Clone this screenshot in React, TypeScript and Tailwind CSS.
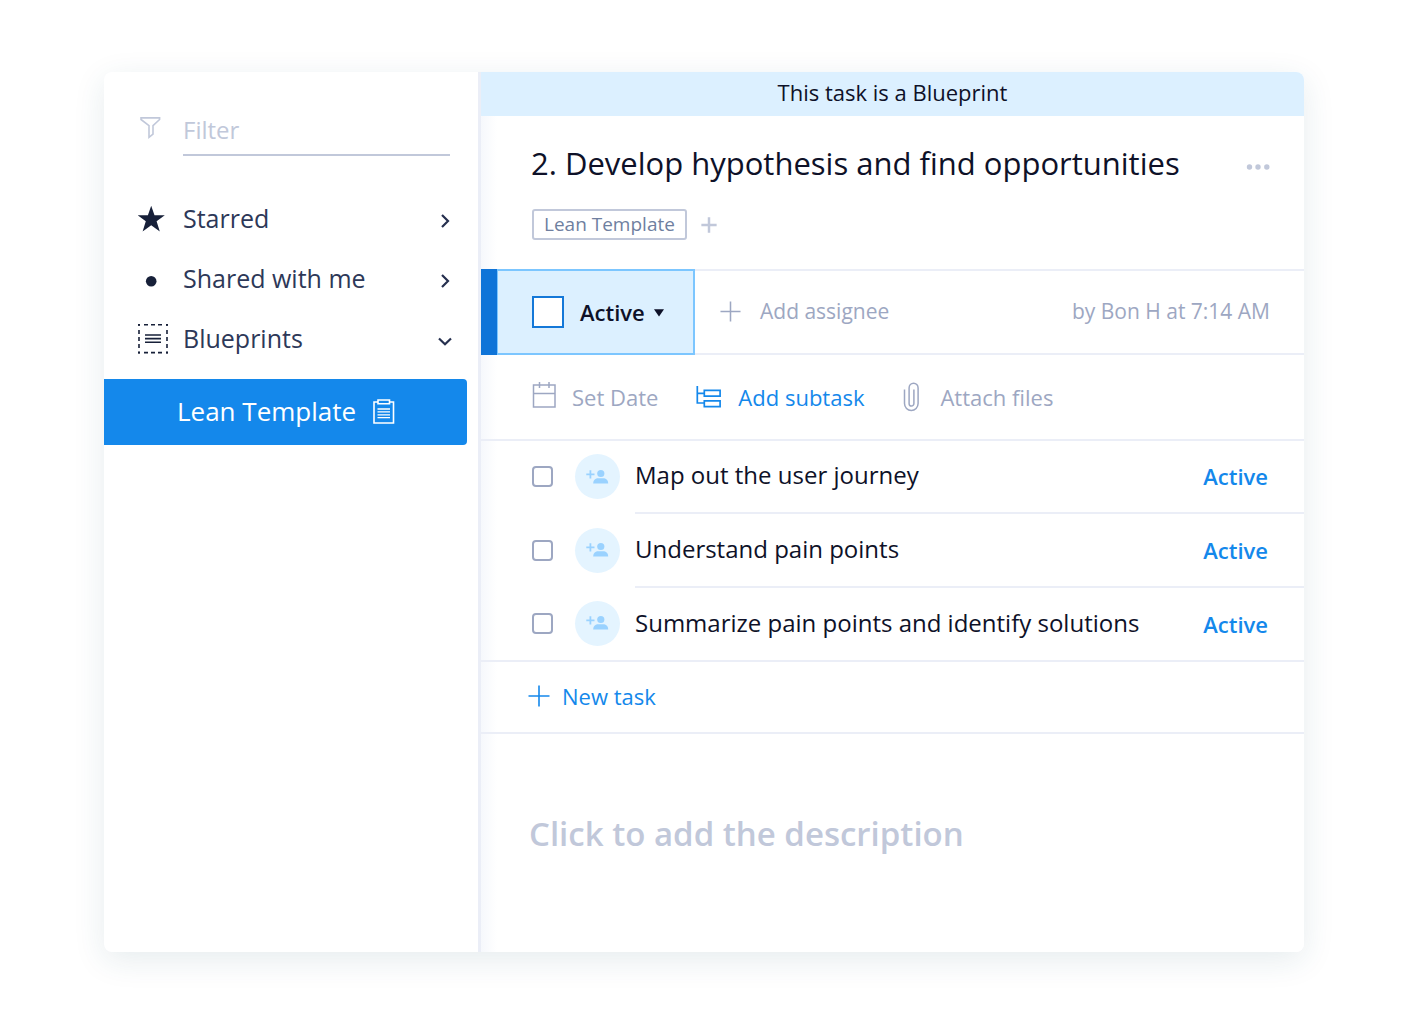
import React from 'react';

const NAV_ITEMS = [
    { label: 'Starred', icon: 'star', open: false },
    { label: 'Shared with me', icon: 'dot', open: false },
    { label: 'Blueprints', icon: 'blueprint', open: true },
];

const TASKS = [
    { id: 1, title: 'Map out the user journey', status: 'Active' },
    { id: 2, title: 'Understand pain points', status: 'Active' },
    { id: 3, title: 'Summarize pain points and identify solutions', status: 'Active' },
];

const NavIcon: React.FC<{ name: string }> = ({ name }) => {
    if (name === 'star') {
        return (
            <svg width="30" height="30" viewBox="0 0 30 30" fill="#172039">
                <path d="M13.200 1.800l3.300 9.500h10.300l-8.200 6 3.200 10.200-8.600-6.300-8.600 6.300 3.200-10.200-8.200-6h10.300z" />
            </svg>
        );
    }
    if (name === 'dot') {
        return (
            <svg width="30" height="30" viewBox="0 0 30 30" fill="#172039">
                <circle cx="13.2" cy="17.3" r="5.3" />
            </svg>
        );
    }
    return (
        <svg width="30" height="30" viewBox="0 0 30 30" fill="none" stroke="#172039" strokeWidth="2">
            <path d="M0 .8h2M6 .8h4M13 .8h4M20 .8h4M28 .8h2M0 28.600h2M6 28.600h4M13 28.600h4M20 28.600h4M28 28.600h2" strokeWidth="1.6" />
            <path d="M1 0v2M1 6v4M1 13v4M1 20v4M1 27.500v2M29 0v2M29 6v4M29 13v4M29 20v4M29 27.500v2" strokeWidth="1.6" />
            <path d="M7 11h16M7 14.600h16M7 18.200h16" strokeWidth="1.6" />
        </svg>
    );
};

const Chevron: React.FC<{ open: boolean }> = ({ open }) => (
    <svg width="16" height="20" viewBox="0 0 16 20" fill="none" stroke="#26304f" strokeWidth="2.2">
        <path d={open ? 'M2 9.500l6 5.800 6-5.800' : 'M5 6l6 6-6 6'} />
    </svg>
);

const Plus: React.FC<{ size: number; stroke?: number }> = ({ size, stroke = 1.6 }) => (
    <svg width={size} height={size} viewBox="0 0 22 22" fill="none" stroke="currentColor" strokeWidth={stroke}>
        <path d="M11 0.5v21M0.5 11h21" />
    </svg>
);

const Sidebar: React.FC = () => (
    <aside className="w-[377px] shrink-0 border-r-[3px] border-[#ebeef7] pt-10">
        <div className="ml-[34px] mr-[28px] flex items-start">
            <svg className="mt-[4px] ml-[2px] mr-[22px]" width="21" height="23" viewBox="0 0 21 23" fill="none" stroke="#c1c8da" strokeWidth="1.6">
                <path d="M1 1.9h18.6v1.6l-6.6 6.2v8.4l-4 3.2V9.7L1 3.5z" />
            </svg>
            <input
                type="text"
                aria-label="Filter"
                placeholder="Filter"
                className="h-11 min-w-0 flex-1 border-b-2 border-[#c1c8da] bg-transparent pb-[8px] text-2xl text-[#2d3858] outline-none placeholder:text-[#c1c8da]"
            />
        </div>

        <nav className="mt-[33px]">
            {NAV_ITEMS.map((item) => (
                <button key={item.label} type="button" className="flex h-[60px] w-full items-center pl-[34px] pr-[25px] text-[25px] text-[#2d3858]">
                    <NavIcon name={item.icon} />
                    <span className="ml-[15px] flex-1 text-left">{item.label}</span>
                    <Chevron open={item.open} />
                </button>
            ))}
            <a href="#lean-template" className="mt-[10px] mr-[11px] flex h-[66px] items-center rounded-r bg-[#1488eb] pb-[2px] pl-[73px] text-[26px] text-white">
                Lean Template
                <svg className="ml-[17px]" width="22" height="25" viewBox="0 0 22 25" fill="none" stroke="#fff" strokeWidth="1.6">
                    <path d="M5 3H1v21h19.500V3h-4M5 1h11.500v3.800H5z" />
                    <path d="M4.500 10h12.500M4.500 12.900h12.500M4.500 15.800h12.500M4.500 18.700h12.500" strokeWidth="1.3" />
                </svg>
            </a>
        </nav>
    </aside>
);

const StatusRow: React.FC = () => (
    <div className="flex h-[86px] items-stretch border-y-2 border-[#ebeef7]">
        <div className="-my-[2px] w-4 bg-[#0f74d8]" />
        <div className="-my-[2px] flex w-[198px] items-center border-y-2 border-r-2 border-l border-[#7cc6ff] bg-[#dcf0ff] pl-[34px]">
            <input
                type="checkbox"
                aria-label="Complete task"
                className="size-8 appearance-none border-2 border-[#1478d8] bg-white"
            />
            <button type="button" className="ml-[16px] flex items-center gap-2 text-[22px] font-semibold text-[#0e1128]">
                Active
                <svg width="12" height="10" viewBox="0 0 12 10" fill="#0e1128">
                    <path d="M1 2.200h10L6 9.600z" />
                </svg>
            </button>
        </div>
        <button type="button" className="ml-[25px] flex items-center gap-[19px] pb-px text-[21px] text-[#9da7c2]">
            <Plus size={21} />
            Add assignee
        </button>
        <span className="ml-auto self-center pr-[34px] text-[21px] text-[#9da7c2]">by Bon H at 7:14 AM</span>
    </div>
);

const ActionRow: React.FC = () => (
    <div className="flex h-[86px] items-center border-b-2 border-[#ebeef7] pl-[51px] text-[22px] text-[#9da7c2]">
        <button type="button" className="flex items-center gap-4">
            <svg width="24" height="32" viewBox="0 0 24 32" fill="none" stroke="currentColor" strokeWidth="1.5">
                <path d="M1.500 4h21.500v22H1.500zM1.500 12.500h21.500M7.500 1v6M17 1v6" />
            </svg>
            Set Date
        </button>
        <button type="button" className="ml-[38px] flex items-center gap-4 text-[#1488eb]">
            <svg width="26" height="22" viewBox="0 0 26 22" fill="none" stroke="currentColor" strokeWidth="1.7">
                <path d="M1.3 0v17h6.5M1.3 7.3h6.5M8.3 4.4h15.8v5.8H8.3zM8.3 14.8h15.8v5.8H8.3z" />
            </svg>
            Add subtask
        </button>
        <button type="button" className="ml-[39px] flex items-center gap-5">
            <svg width="17" height="30" viewBox="0 0 17 30" fill="none" stroke="currentColor" strokeWidth="1.5">
                <path d="M1.500 7.500v14a6.800 7 0 0 0 13.600 0V6a4.500 4.800 0 0 0-9 0v15.500a2.400 2.600 0 0 0 4.800 0V7.500" />
            </svg>
            Attach files
        </button>
    </div>
);

export const TaskPanel: React.FC = () => (
    <main className="flex min-w-0 flex-1 flex-col bg-linear-to-r from-[#f6f8fc] to-white to-[16px]">
        <div className="flex h-11 items-center justify-center bg-[#dcf0ff] pb-[3px] text-[22px] text-[#0e1128]">
            This task is a Blueprint
        </div>

        {/* Title and tags */}
        <header className="h-[153px] pt-[26px] pr-[34px] pl-[50px]">
            <div className="flex items-center justify-between">
                <h1 className="text-[31px] leading-[42px] text-[#0e1128]">2. Develop hypothesis and find opportunities</h1>
                <button type="button" aria-label="More actions" className="pt-2">
                    <svg width="24" height="6" viewBox="0 0 24 6" fill="#c1c8da">
                        <circle cx="3.500" cy="3" r="2.700" />
                        <circle cx="12" cy="3" r="2.700" />
                        <circle cx="20.800" cy="3" r="2.700" />
                    </svg>
                </button>
            </div>
            <div className="mt-[25px] flex items-center gap-[14px] pl-px">
                <a href="#lean-template" className="flex h-[31px] items-center rounded-[3px] border-2 border-[#c1c8da] px-[10px] text-[19px] text-[#6f7f9f]">
                    Lean Template
                </a>
                <button type="button" aria-label="Add tag" className="text-[#c1c8da]">
                    <Plus size={16} stroke={3.4} />
                </button>
            </div>
        </header>

        <StatusRow />
        <ActionRow />

        {/* Subtasks */}
        <ul className="border-b-2 border-[#ebeef7]">
            {TASKS.map((task) => (
                <li key={task.id} className="group flex h-[74px] items-center pl-[51px] first:h-[73px] last:h-[72px]">
                    <div className="flex items-center pb-[2px]">
                        <input
                            id={`task-${task.id}`}
                            type="checkbox"
                            className="size-[21px] appearance-none rounded-[4px] border-2 border-[#9da7c2] bg-white"
                        />
                        <button type="button" aria-label="Assign" className="ml-[22px] flex size-[45px] items-center justify-center rounded-full bg-[#e4f4ff]">
                            <svg width="24" height="16" viewBox="0 0 24 16" fill="#9ad2ff">
                                <path d="M3.500 1.300h1.800v3.200H8.500v1.800H5.300v3.200H3.500V6.300H.300V4.500h3.200z" />
                                <circle cx="14.800" cy="4.500" r="3.600" />
                                <path d="M7.200 14.500c0-3.600 2.500-5.200 5-5.200h5c2.500 0 5 1.600 5 5.200z" />
                            </svg>
                        </button>
                    </div>
                    <div className="ml-[15px] flex flex-1 items-center justify-between self-stretch border-b-2 border-[#ebeef7] pr-9 group-last:border-b-0">
                        <label htmlFor={`task-${task.id}`} className="pb-[3px] text-2xl text-[#0e1128]">{task.title}</label>
                        <span className="text-[22px] font-semibold text-[#1488eb]">{task.status}</span>
                    </div>
                </li>
            ))}
        </ul>

        <button type="button" className="flex h-[72px] items-center gap-3 border-b-2 border-[#ebeef7] pb-[2px] pl-[47px] text-[22px] text-[#1488eb]">
            <Plus size={22} />
            New task
        </button>

        <button type="button" className="mt-[75px] pl-[48px] text-left text-[33px] font-semibold text-[#c1c8da]">
            Click to add the description
        </button>
    </main>
);

const App: React.FC = () => (
    <div className="flex min-h-screen bg-white px-[104px] py-[72px] font-['Open_Sans',sans-serif]">
        <div className="flex flex-1 overflow-hidden rounded-lg bg-white shadow-[0_8px_32px_rgba(30,80,100,0.11)]">
            <Sidebar />
            <TaskPanel />
        </div>
    </div>
);

export default App;
